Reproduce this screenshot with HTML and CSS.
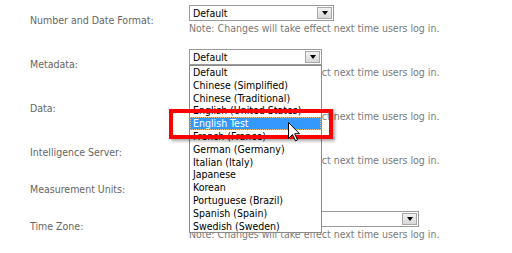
FILE: index.html
```html
<!DOCTYPE html>
<html lang="en">
<head>
    <meta charset="UTF-8">
    <meta name="viewport" content="width=device-width, initial-scale=1.0">
    <title>Preferences - Language</title>
    <link rel="stylesheet" href="styles.css">
</head>
<body>
    <div class="prefs">
        <div class="label">Number and Date Format:</div>
        <div class="field">
            <div class="select w-format"><span class="value">Default</span><span class="arrow"></span></div>
            <div class="note">Note: Changes will take effect next time users log in.</div>
        </div>

        <div class="label">Metadata:</div>
        <div class="field open">
            <div class="select w-list"><span class="value">Default</span><span class="arrow"></span></div>
            <div class="note">Note: Changes will take effect next time users log in.</div>

            <!-- open dropdown -->
            <ul class="options">
                <li>Default</li>
                <li>Chinese (Simplified)</li>
                <li>Chinese (Traditional)</li>
                <li>English (United States)</li>
                <li class="hover">English Test</li>
                <li>French (France)</li>
                <li>German (Germany)</li>
                <li>Italian (Italy)</li>
                <li>Japanese</li>
                <li>Korean</li>
                <li>Portuguese (Brazil)</li>
                <li>Spanish (Spain)</li>
                <li>Swedish (Sweden)</li>
            </ul>
        </div>

        <div class="label">Data:</div>
        <div class="field">
            <div class="select w-list"><span class="value">Default</span><span class="arrow"></span></div>
            <div class="note">Note: Changes will take effect next time users log in.</div>
        </div>

        <div class="label">Intelligence Server:</div>
        <div class="field">
            <div class="select w-list"><span class="value">Default</span><span class="arrow"></span></div>
            <div class="note">Note: Changes will take effect next time users log in.</div>
        </div>

        <div class="label">Measurement Units:</div>
        <div class="field">
            <div class="select w-list"><span class="value">Inches</span><span class="arrow"></span></div>
        </div>

        <div class="label">Time Zone:</div>
        <div class="field">
            <div class="select w-zone"><span class="value"></span><span class="arrow"></span></div>
            <div class="note">Note: Changes will take effect next time users log in.</div>
        </div>
    </div>

    <!-- annotation over the screenshot -->
    <div class="callout"></div>

    <svg class="cursor" width="13" height="20" viewBox="0 0 13 20">
        <path d="M0.5 0.5 L0.5 16.5 L4.5 12.5 L7.5 19 L9.5 18 L6.7 11.7 L11.5 11.7 Z" fill="#fff" stroke="#000" stroke-width="1"/>
    </svg>
</body>
</html>
```

FILE: styles.css
```css
body {
    margin: 0;
    background: #fff;
    font-family: "DejaVu Sans Condensed", "DejaVu Sans", sans-serif;
    font-stretch: condensed;
    font-size: 10.5px;
}

.prefs {
    display: grid;
    grid-template-columns: 159px auto;
    row-gap: 14px;
    padding: 5px 0 0 30px;
}

.label {
    align-self: center;
    color: #666;
}

.field {
    position: relative;
}

.select {
    box-sizing: border-box;
    height: 16px;
    display: flex;
    align-items: center;
    justify-content: space-between;
    border: 1px solid #9a9a9a;
    background: #fff;
    color: #000;
}

.w-format { width: 145px; }
.w-list { width: 133px; }
.w-zone { width: 230px; }

.value {
    padding-left: 3px;
    line-height: 14px;
}

.arrow {
    box-sizing: border-box;
    width: 15px;
    height: 12px;
    margin-right: 1px;
    border: 1px solid #a8a8a8;
    background: linear-gradient(#f2f2f2, #d8d8d8);
    display: flex;
    align-items: center;
    justify-content: center;
}

.arrow::after {
    content: "";
    border-left: 3.5px solid transparent;
    border-right: 3.5px solid transparent;
    border-top: 4px solid #000;
}

.note {
    color: #7a7a7a;
    line-height: 14px;
    white-space: nowrap;
}

.options {
    position: absolute;
    top: 16px;
    left: 0;
    width: 133px;
    box-sizing: border-box;
    margin: 0;
    padding: 0;
    list-style: none;
    background: #fff;
    border: 1px solid #8a8a8a;
    z-index: 2;
}

.options li {
    line-height: 12.8px;
    height: 12.8px;
    padding-left: 3px;
    color: #000;
    white-space: nowrap;
}

.options .hover {
    background: #3399ff;
    color: #fff;
    outline: 1px dotted #e8c27a;
    outline-offset: -1px;
}

.callout {
    position: absolute;
    left: 169px;
    top: 109px;
    width: 164px;
    height: 30px;
    box-sizing: border-box;
    border: 4px solid #f00;
    box-shadow: 2px 2px 3px rgba(0, 0, 0, 0.35);
    z-index: 3;
}

.cursor {
    position: absolute;
    left: 288px;
    top: 122px;
    z-index: 4;
}
```
